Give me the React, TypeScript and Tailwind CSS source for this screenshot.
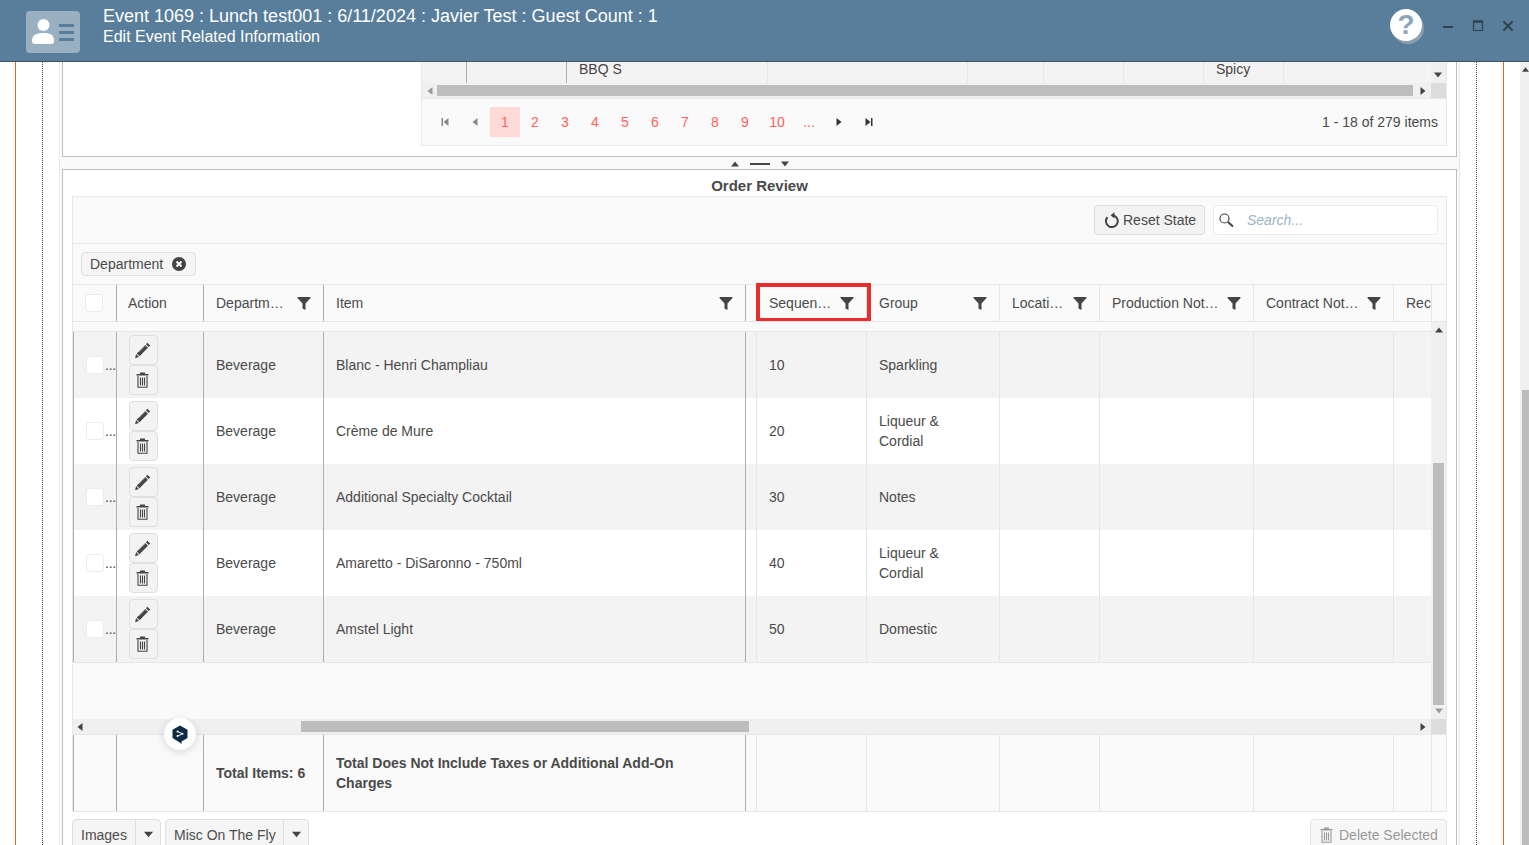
import React from "react";

const Tri = ({ d, c = "#555", s = 8 }: { d: "u" | "d" | "l" | "r"; c?: string; s?: number }) => {
  const p = { u: "4,1.5 8,6.5 0,6.5", d: "0,1.5 8,1.5 4,6.5", l: "6.5,0 6.5,8 1.5,4", r: "1.5,0 1.5,8 6.5,4" }[d];
  return (
    <svg width={s} height={s} viewBox="0 0 8 8" className="shrink-0">
      <polygon points={p} fill={c} />
    </svg>
  );
};

const Funnel = () => (
  <svg width="14" height="14" viewBox="0 0 14 14" className="shrink-0">
    <polygon points="0.5,1 13.5,1 13.5,2 8.5,7.5 8.5,14 5.5,12.5 5.5,7.5 0.5,2" fill="#444" />
  </svg>
);

const Pencil = () => (
  <svg width="17" height="17" viewBox="0 0 16 16" className="-ml-[2px]">
    <path d="M12.6 0.800 15.200 3.400 13.800 4.800 11.200 2.200ZM10.500 2.900 13.100 5.500 5.200 13.400 2.600 10.800ZM2 11.400 4.600 14 1 15.200Z" fill="#444" />
    <path d="M4.200 9.500l6-6" stroke="#f3f3f3" strokeWidth="0.500" />
  </svg>
);

const Trash = ({ c = "#444" }: { c?: string }) => (
  <svg width="13" height="16" viewBox="0 0 13 16" className="-ml-[2px]">
    <path d="M4 0.500h5v1.500h3.500v1.500H0.500V2H4z" fill={c} />
    <path d="M2 4V15.200h9V4M4.500 5.500v8M6.500 5.500v8M8.500 5.500v8" stroke={c} strokeWidth="1.100" fill="none" />
  </svg>
);

const FIRST = "grid grid-cols-[43px_87px_120px_422px_11px_110px_133px_100px_154px_140px_38px]";

const head = [
  ["Departm…", true],
  ["Item", true],
  ["", false],
  ["Sequen…", true],
  ["Group", true],
  ["Locati…", true],
  ["Production Not…", true],
  ["Contract Not…", true],
  ["Rec", false],
] as const;

const rows = [
  { item: "Blanc - Henri Champliau", seq: "10", g: ["Sparkling"], odd: true },
  { item: "Crème de Mure", seq: "20", g: ["Liqueur &", "Cordial"], odd: false },
  { item: "Additional Specialty Cocktail", seq: "30", g: ["Notes"], odd: true },
  { item: "Amaretto - DiSaronno - 750ml", seq: "40", g: ["Liqueur &", "Cordial"], odd: false },
  { item: "Amstel Light", seq: "50", g: ["Domestic"], odd: true },
];

const DARK = "border-l border-[#adadad]";
const LIGHT = "border-l border-[#e6e6e6]";

const SideLines = ({ right }: { right?: boolean }) =>
  right ? (
    <>
      <div className="w-[17px] shrink-0 border-r border-dotted border-[#444]" />
      <div className="w-[27px] shrink-0 border-r border-[#e8622c]" />
    </>
  ) : (
    <>
      <div className="w-[16px] shrink-0 border-r border-[#e8622c]" />
      <div className="w-[27px] shrink-0 border-r border-dotted border-[#444]" />
      <div className="w-[16px] shrink-0" />
    </>
  );

const Btn = ({ children }: { children: React.ReactNode }) => (
  <div className="flex h-[30px] w-[29px] items-center justify-center rounded-[4px] border border-[#dfdfdf] bg-[#f3f3f3]">
    {children}
  </div>
);

const Split = ({ label, w }: { label: string; w: string }) => (
  <div className={`flex h-[40px] items-start rounded-[4px] border border-[#dedede] bg-[#f5f5f5] ${w}`}>
    <span className="flex-1 pl-[8px] pt-[5px] text-[#4d4d4d]">{label}</span>
    <span className="flex h-full w-[25px] justify-center border-l border-[#dedede] pt-[10px]">
      <Tri d="d" c="#444" s={9} />
    </span>
  </div>
);

export default function App() {
  return (
    <div className="relative flex h-[845px] w-[1529px] flex-col overflow-hidden bg-white text-[14px] leading-[20px] text-[#4a4a4a] [font-family:Liberation_Sans,Arial,sans-serif]">
      <header className="relative z-10 flex h-[62px] shrink-0 items-start border-b border-[#3f5668] bg-[#587e9b] text-white">
        <div className="ml-[26px] mt-[11px] flex h-[42px] w-[54px] items-center rounded-[4px] bg-[#98b0c2] pl-[6px]">
          <svg width="42" height="30" viewBox="0 0 42 30">
            <circle cx="11.500" cy="8" r="6" fill="#fff" />
            <path d="M0 24c0-6 4-8 11.500-8S22 18 22 24c0 2-1 3-3 3H3c-2 0-3-1-3-3Z" fill="#fff" />
            <path d="M27 7h15v3H27zM27 14h15v3H27zM27 21h15v3H27z" fill="#587e9b" />
          </svg>
        </div>
        <div className="ml-[23px] pt-[4px]">
          <div className="text-[18px] leading-[24px]">Event 1069 : Lunch test001 : 6/11/2024 : Javier Test : Guest Count : 1</div>
          <div className="text-[16px] leading-[18px]">Edit Event Related Information</div>
        </div>
        <div className="ml-auto flex items-start">
          <div className="mt-[9px] flex h-[32px] w-[32px] items-center justify-center rounded-full bg-white text-[28px] font-bold leading-none text-[#8ba5ba] shadow-[2px_3px_0_#8d9fae]">
            ?
          </div>
          <svg width="106" height="40" viewBox="0 0 106 40" className="ml-[1px] mt-[6px]">
            <path d="M20 21h10" stroke="#33414d" strokeWidth="2" />
            <path d="M50.500 15.500h9v9h-9z" stroke="#33414d" strokeWidth="1.200" fill="none" />
            <path d="M50 15.500h10" stroke="#33414d" strokeWidth="2.500" />
            <path d="M80.500 15.500l9 9M89.500 15.500l-9 9" stroke="#33414d" strokeWidth="2" />
          </svg>
        </div>
      </header>

      <div className="flex min-h-0 flex-1">
        <SideLines />
        <main className="flex w-[1401px] shrink-0 flex-col border-x border-[#e8e8e8] bg-[#fafafa] px-[2px]">
          {/* upper panel */}
          <section className="flex h-[95px] shrink-0 border-x border-b border-[#bdbdbd] bg-white">
            <div className="w-[358px] shrink-0" />
            <div className="h-[84px] w-[1026px] shrink-0 border-x border-[#e8e8e8]">
              <div className="flex h-[21px]">
                <div className="grid flex-1 grid-cols-[44px_100px_201px_200px_76px_80px_80px_80px_148px] bg-[#f3f3f3] text-[#444]">
                  <div />
                  <div className={DARK} />
                  <div className={`${DARK} flex items-end pb-[7px] pl-[12px] leading-[14px]`}>BBQ S</div>
                  <div className={LIGHT} />
                  <div className={LIGHT} />
                  <div className={LIGHT} />
                  <div className={LIGHT} />
                  <div className={`${LIGHT} flex items-end pb-[7px] pl-[12px] leading-[14px]`}>Spicy</div>
                  <div className={LIGHT} />
                </div>
                <div className="flex w-[15px] items-end justify-center bg-[#f0f0f0] pb-[4px] pr-[1px]">
                  <Tri d="d" c="#444" />
                </div>
              </div>
              <div className="flex h-[16px] items-center border-b border-[#e8e8e8] bg-[#f0f0f0]">
                <div className="flex flex-1 items-center">
                  <span className="flex w-[15px] justify-center"><Tri d="l" c="#999" /></span>
                  <div className="h-[11px] w-[976px] bg-[#bdbdbd]" />
                  <span className="ml-[6px] flex w-[8px] justify-center"><Tri d="r" c="#444" /></span>
                </div>
                <div className="h-full w-[15px] bg-[#dcdcdc]" />
              </div>
              <div className="flex h-[47px] items-center border-b border-[#e8e8e8] bg-[#fafafa] pl-[8px] pr-[8px]">
                <div className="flex w-[30px] justify-center"><Skip rev c="#888" /></div>
                <div className="flex w-[30px] justify-center"><Tri d="l" c="#888" /></div>
                <div className="flex h-[30px] w-[30px] items-center justify-center bg-[#fdd9d8] text-[#ff6358]">1</div>
                {["2", "3", "4", "5", "6", "7", "8", "9"].map((n) => (
                  <div key={n} className="w-[30px] text-center text-[#ff6358]">{n}</div>
                ))}
                <div className="w-[34px] text-center text-[#ff6358]">10</div>
                <div className="w-[30px] text-center text-[#ff6358]">...</div>
                <div className="flex w-[30px] justify-center"><Tri d="r" c="#333" /></div>
                <div className="flex w-[30px] justify-center"><Skip c="#333" /></div>
                <div className="ml-auto">1 - 18 of 279 items</div>
              </div>
            </div>
          </section>

          {/* splitter */}
          <div className="flex h-[12px] shrink-0 items-center justify-center gap-[11px] pt-[1px]">
            <Tri d="u" c="#444" s={8} />
            <div className="h-[2px] w-[20px] bg-[#444]" />
            <Tri d="d" c="#444" s={8} />
          </div>

          {/* lower panel */}
          <section className="flex-1 border-x border-t border-[#bdbdbd] bg-white px-[9px]">
            <h2 className="flex h-[26px] items-center justify-center pt-[6px] text-[15px] font-bold text-[#4a4a4a]">Order Review</h2>
            <div className="h-[616px] w-[1375px] border border-[#e8e8e8] bg-[#fafafa]">
              <div className="flex h-[47px] items-center justify-end gap-[8px] border-b border-[#e8e8e8] pr-[8px]">
                <div className="flex h-[30px] w-[111px] items-center rounded-[4px] border border-[#dfdfdf] bg-[#f3f3f3] pl-[9px]">
                  <svg width="16" height="16" viewBox="0 0 16 16">
                    <path d="M3.500 5.200A5.900 5.900 0 1 0 8 3.300" stroke="#444" strokeWidth="2" fill="none" />
                    <polygon points="6.500,3.300 10.500,0.200 10.500,6.500" fill="#444" />
                  </svg>
                  <span className="ml-[3px]">Reset State</span>
                </div>
                <div className="flex h-[30px] w-[225px] items-center rounded-[4px] border border-[#ececec] bg-white pl-[4px]">
                  <svg width="16" height="16" viewBox="0 0 16 16">
                    <circle cx="6.500" cy="6.500" r="4.500" stroke="#444" strokeWidth="1.200" fill="none" />
                    <path d="M10 10l5 4.500" stroke="#444" strokeWidth="2" />
                  </svg>
                  <span className="ml-[13px] italic text-[#9db5c6]">Search...</span>
                </div>
              </div>

              <div className="flex h-[40px] items-center pl-[8px]">
                <div className="flex h-[24px] w-[115px] items-center rounded-[4px] border border-[#e0e0e0] bg-[#f5f5f5] pl-[8px]">
                  <span>Department</span>
                  <svg width="14" height="14" viewBox="0 0 14 14" className="ml-[9px]">
                    <circle cx="7" cy="7" r="7" fill="#444" />
                    <path d="M4.500 4.500l5 5M9.500 4.500l-5 5" stroke="#fff" strokeWidth="2" />
                  </svg>
                </div>
              </div>

              {/* header */}
              <div className="flex h-[38px] border-y border-[#e6e6e6]">
                <div className={`${FIRST} flex-none`}>
                  <div className="flex items-center pl-[12px]">
                    <div className="h-[18px] w-[18px] rounded-[3px] border border-[#ececec] bg-white" />
                  </div>
                  <div className={`${DARK} flex items-center pl-[11px]`}>Action</div>
                  {head.map(([t, f], i) => (
                    <div key={i} className={`${i < 3 ? DARK : LIGHT} flex items-center justify-between overflow-hidden pl-[12px] pr-[12px]`}>
                      <span className="whitespace-nowrap">{t}</span>
                      {f && <Funnel />}
                    </div>
                  ))}
                </div>
                <div className={`${LIGHT} flex-1`} />
              </div>

              {/* body */}
              <div className="flex h-[397px]">
                <div className="flex w-[1358px] flex-col">
                  <div className="h-[10px] shrink-0 border-b border-[#e6e6e6]" />
                  {rows.map((r) => (
                    <div key={r.seq} className={`${FIRST} h-[66px] shrink-0 ${r.odd ? "bg-[#f3f3f3]" : "bg-white"}`}>
                      <div className="flex items-center border-l border-[#adadad] pl-[12px]">
                        <div className="h-[18px] w-[18px] shrink-0 rounded-[3px] border border-[#ececec] bg-white" />
                        <span className="ml-[1px] tracking-[-0.25px]">...</span>
                      </div>
                      <div className={`${DARK} flex flex-col pl-[12px] pt-[3px]`}>
                        <Btn><Pencil /></Btn>
                        <Btn><Trash /></Btn>
                      </div>
                      <div className={`${DARK} flex items-center pl-[12px]`}>Beverage</div>
                      <div className={`${DARK} flex items-center pl-[12px]`}>{r.item}</div>
                      <div className={DARK} />
                      <div className={`${LIGHT} flex items-center pl-[12px]`}>{r.seq}</div>
                      <div className={`${LIGHT} flex flex-col justify-center pl-[12px]`}>
                        {r.g.map((x) => <span key={x}>{x}</span>)}
                      </div>
                      <div className={LIGHT} />
                      <div className={LIGHT} />
                      <div className={LIGHT} />
                      <div className={LIGHT} />
                    </div>
                  ))}
                  <div className="flex-1 border-t border-[#e6e6e6]" />
                </div>
                <div className="flex flex-1 flex-col items-center bg-[#f0f0f0]">
                  <div className="mt-[4px] flex h-[137px] items-start"><Tri d="u" c="#444" /></div>
                  <div className="h-[242px] w-[11px] bg-[#bdbdbd]" />
                  <div className="mt-[2px]"><Tri d="d" c="#999" /></div>
                </div>
              </div>

              {/* horizontal scrollbar */}
              <div className="flex h-[16px] items-center border-b border-[#e6e6e6] bg-[#f0f0f0]">
                <div className="flex w-[1358px] items-center">
                  <span className="flex w-[14px] justify-center"><Tri d="l" c="#444" /></span>
                  <div className="ml-[214px] h-[11px] w-[448px] bg-[#bdbdbd]" />
                  <span className="ml-[670px] flex w-[8px] justify-center"><Tri d="r" c="#444" /></span>
                </div>
                <div className="h-full flex-1 bg-[#dcdcdc]" />
              </div>

              {/* footer */}
              <div className="flex h-[77px] border-b border-[#e6e6e6]">
                <div className={`${FIRST} flex-none font-bold`}>
                  <div className="border-l border-[#adadad]" />
                  <div className={DARK} />
                  <div className={`${DARK} flex items-center pl-[12px]`}>Total Items: 6</div>
                  <div className={`${DARK} flex items-center pl-[12px]`}>
                    <span>Total Does Not Include Taxes or Additional Add-On<br />Charges</span>
                  </div>
                  <div className={DARK} />
                  <div className={LIGHT} />
                  <div className={LIGHT} />
                  <div className={LIGHT} />
                  <div className={LIGHT} />
                  <div className={LIGHT} />
                  <div className={LIGHT} />
                </div>
                <div className={`${LIGHT} flex-1`} />
              </div>

              <div className="-mx-[1px] mt-[7px] flex gap-[4px]">
                <Split label="Images" w="w-[89px]" />
                <Split label="Misc On The Fly" w="w-[144px]" />
                <div className="ml-auto flex h-[40px] w-[137px] items-start rounded-[4px] border border-[#e4e4e4] bg-[#f7f7f7] pl-[11px] pt-[5px] text-[#999]">
                  <span className="mt-[2px]"><Trash c="#999" /></span>
                  <span className="ml-[6px]">Delete Selected</span>
                </div>
              </div>
            </div>
          </section>
        </main>
        <SideLines right />
        <div className="flex-1" />
        <aside className="flex w-[9px] shrink-0 flex-col bg-[#f0f0f0]">
          <div className="flex h-[328px] justify-end pt-[4px]"><Tri d="u" c="#444" s={7} /></div>
          <div className="ml-[2px] flex-1 bg-[#bdbdbd]" />
        </aside>
      </div>

      {/* floating badge */}
      <div className="absolute left-[164px] top-[718px] z-20 flex h-[32px] w-[32px] items-center justify-center rounded-full bg-white shadow-[0_2px_10px_rgba(0,0,0,0.15)]">
        <svg width="16" height="19" viewBox="0 0 16 19">
          <path d="M8 0.500 15.500 4.800V13L9.500 16.500 9.500 19 7 17 0.500 13V4.800Z" fill="#0f2b46" />
          <path d="M5.500 6.500l5 2.300-5 2.300" stroke="#fff" strokeWidth="1" fill="none" />
          <circle cx="5.500" cy="6.500" r="1" fill="#fff" />
          <circle cx="5.500" cy="11.100" r="1" fill="#fff" />
          <circle cx="10.500" cy="8.800" r="1" fill="#fff" />
        </svg>
      </div>

      {/* highlight */}
      <div className="absolute left-[756px] top-[283px] z-20 h-[38px] w-[115px] border-[4px] border-b-[3px] border-[#e92c2c]" />
    </div>
  );
}

function Skip({ rev, c }: { rev?: boolean; c: string }) {
  return (
    <svg width="8" height="8" viewBox="0 0 8 8">
      {rev ? <path d="M0.500 0h1.500v8H0.500zM7.500 0v8L2.500 4z" fill={c} /> : <path d="M6 0h1.500v8H6zM0.500 0v8L5.500 4z" fill={c} />}
    </svg>
  );
}
